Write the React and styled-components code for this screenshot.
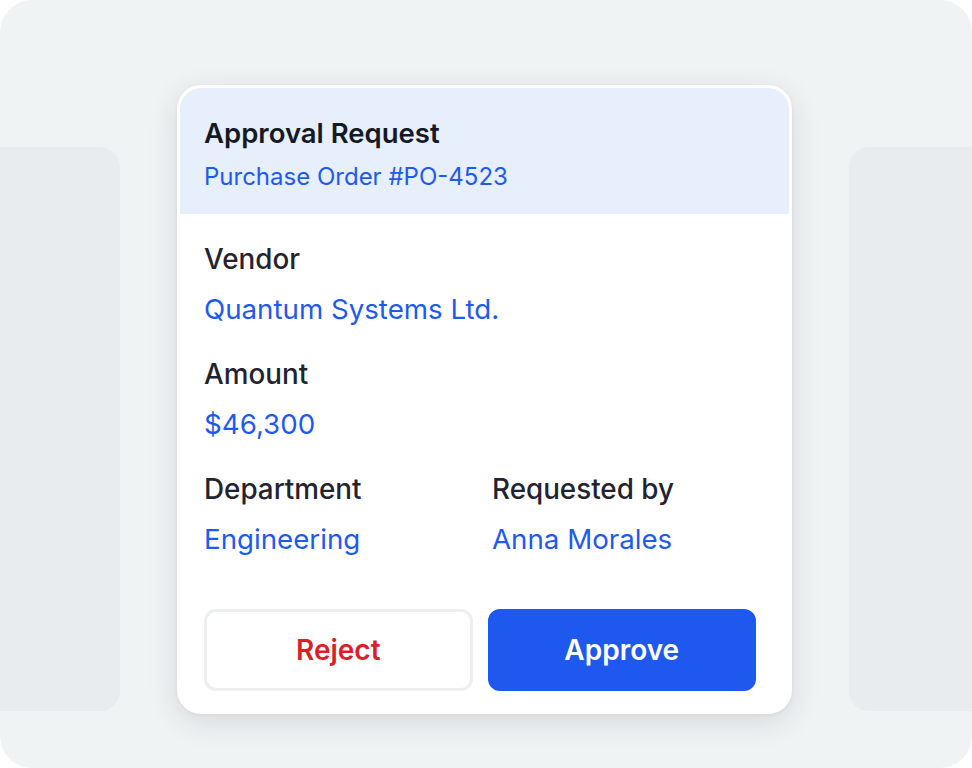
import React from 'react'
import styled, { createGlobalStyle } from 'styled-components'

const GlobalStyle = createGlobalStyle`
    html, body {
        margin: 0;
        padding: 0;
        background: #ffffff;
    }
    body {
        font-family: Inter, "Noto Sans", sans-serif;
    }
`

const Stage = styled.div`
    width: 972px;
    height: 768px;
    background: #f0f3f4;
    border-radius: 32px;
    overflow: hidden;
    display: grid;
    grid-template-columns: 120px 1fr 123px;
    align-items: start;
`

const SidePanel = styled.div`
    margin-top: 147px;
    height: 564px;
    background: #e8ecee;
    border-radius: ${p => (p.side === 'left' ? '0 20px 20px 0' : '20px 0 0 20px')};
`

const Center = styled.div`
    display: flex;
    justify-content: center;
    padding-top: 85px;
`

const Card = styled.div`
    width: 609px;
    background: #ffffff;
    border: 3px solid #ffffff;
    border-radius: 24px;
    overflow: hidden;
    box-shadow: 0 8px 30px rgba(30, 40, 50, 0.12), 0 1px 4px rgba(30, 40, 50, 0.06);
`

const Header = styled.div`
    background: #e7eefc;
    padding: 28px 24px 21px;
    display: flex;
    flex-direction: column;
    gap: 11px;
`

const Title = styled.div`
    font-size: 27.5px;
    font-weight: 600;
    color: #141a24;
    line-height: 34px;
`

const Subtitle = styled.div`
    font-size: 24px;
    color: #1d5af0;
    line-height: 32px;
`

const Body = styled.div`
    padding: 28px 33px 20px 24px;
`

const Fields = styled.div`
    display: grid;
    grid-template-columns: 288px 1fr;
    row-gap: 31px;
`

const Field = styled.div`
    grid-column: ${p => (p.wide ? 'span 2' : 'span 1')};
    display: flex;
    flex-direction: column;
    gap: 16px;
`

const Label = styled.div`
    font-size: 27.8px;
    font-weight: 500;
    color: #1f2430;
    line-height: 34px;
`

const Value = styled.div`
    font-size: 27.7px;
    color: #1d5af0;
    line-height: 34px;
`

const Actions = styled.div`
    margin-top: 53px;
    display: grid;
    grid-template-columns: 1fr 1fr;
    gap: 15px;
`

const Button = styled.button`
    height: 82px;
    border-radius: 12px;
    font-family: inherit;
    font-size: 28px;
    font-weight: 600;
    cursor: pointer;
    border: 3px solid ${p => (p.primary ? '#1f58ef' : '#eceeef')};
    background: ${p => (p.primary ? '#1f58ef' : '#ffffff')};
    color: ${p => (p.primary ? '#ffffff' : '#dc1f26')};
`

const fields = [
    { label: 'Vendor', value: 'Quantum Systems Ltd.', wide: true },
    { label: 'Amount', value: '$46,300', wide: true },
    { label: 'Department', value: 'Engineering' },
    { label: 'Requested by', value: 'Anna Morales' }
]

export default function App() {
    return (
        <>
            <GlobalStyle />
            <Stage>
                <SidePanel side="left" />
                <Center>
                    <Card>
                        <Header>
                            <Title>Approval Request</Title>
                            <Subtitle>Purchase Order #PO-4523</Subtitle>
                        </Header>
                        <Body>
                            <Fields>
                                {fields.map(f => (
                                    <Field key={f.label} wide={f.wide}>
                                        <Label>{f.label}</Label>
                                        <Value>{f.value}</Value>
                                    </Field>
                                ))}
                            </Fields>
                            <Actions>
                                <Button>Reject</Button>
                                <Button primary>Approve</Button>
                            </Actions>
                        </Body>
                    </Card>
                </Center>
                <SidePanel side="right" />
            </Stage>
        </>
    )
}
